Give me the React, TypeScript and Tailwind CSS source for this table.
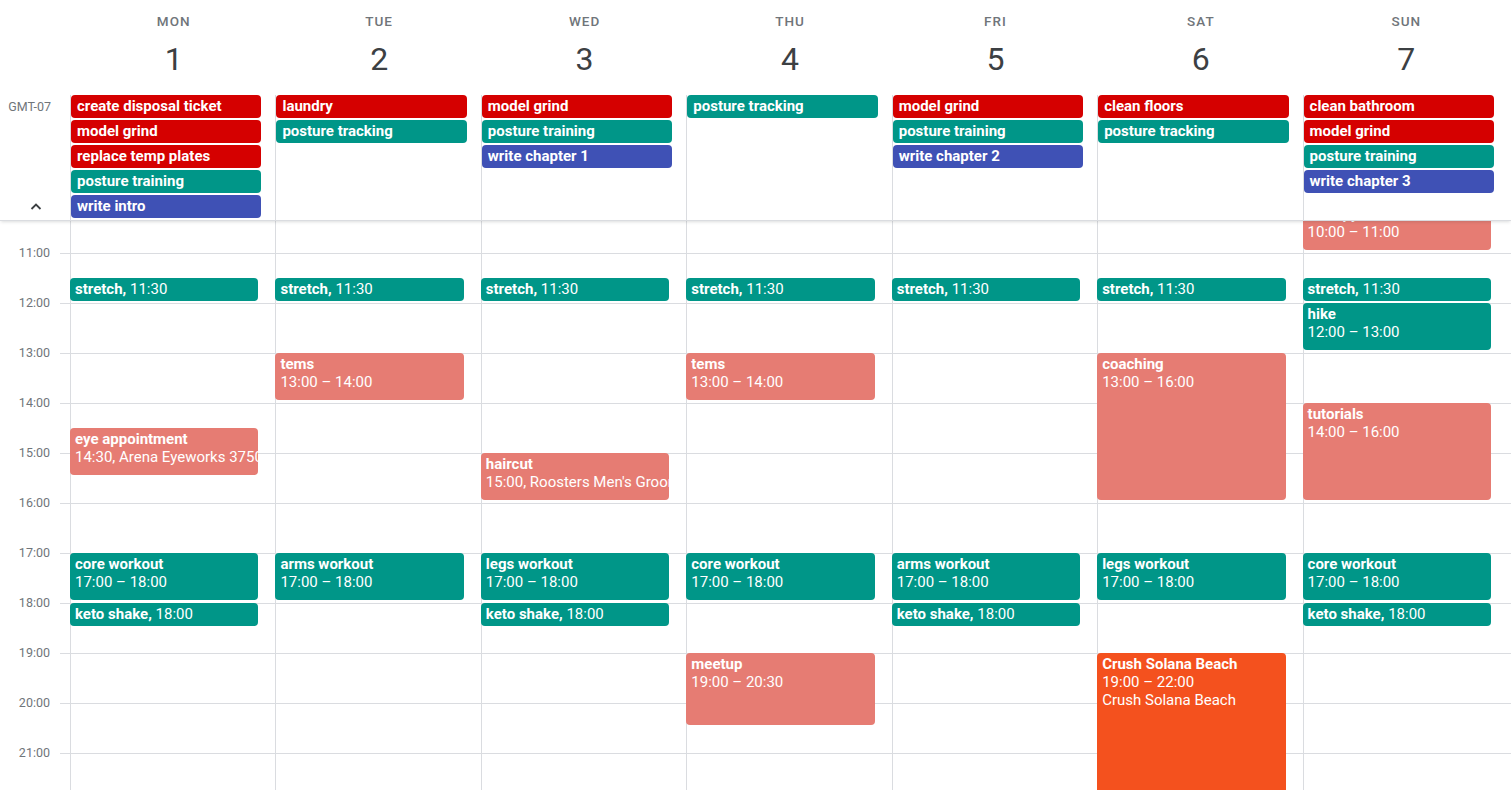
import React from 'react';

type Color = 'red' | 'teal' | 'blue' | 'salmon' | 'orange';

const colorClass: Record<Color, string> = {
  red: 'bg-[#d50000]',
  teal: 'bg-[#009688]',
  blue: 'bg-[#3f51b5]',
  salmon: 'bg-[#e67c73]',
  orange: 'bg-[#f4511e]',
};

interface AllDayEvent {
  title: string;
  color: Color;
}

interface TimedEvent {
  title: string;
  start: number;
  end?: number; // no end = short one-line event
  detail?: string;
  extra?: string;
  color: Color;
}

interface Day {
  name: string;
  date: number;
  allDay: AllDayEvent[];
  events: TimedEvent[];
}

const START_HOUR = 10;
const HOUR_HEIGHT = 50;
const hours = [10, 11, 12, 13, 14, 15, 16, 17, 18, 19, 20, 21, 22, 23];

const stretch: TimedEvent = { title: 'stretch', start: 11.5, color: 'teal' };
const keto: TimedEvent = { title: 'keto shake', start: 18, color: 'teal' };

const days: Day[] = [
  {
    name: 'MON',
    date: 1,
    allDay: [
      { title: 'create disposal ticket', color: 'red' },
      { title: 'model grind', color: 'red' },
      { title: 'replace temp plates', color: 'red' },
      { title: 'posture training', color: 'teal' },
      { title: 'write intro', color: 'blue' },
    ],
    events: [
      stretch,
      { title: 'eye appointment', start: 14.5, end: 15.5, detail: '14:30, Arena Eyeworks 3750 Via de la Valle', color: 'salmon' },
      { title: 'core workout', start: 17, end: 18, color: 'teal' },
      keto,
    ],
  },
  {
    name: 'TUE',
    date: 2,
    allDay: [
      { title: 'laundry', color: 'red' },
      { title: 'posture tracking', color: 'teal' },
    ],
    events: [
      stretch,
      { title: 'tems', start: 13, end: 14, color: 'salmon' },
      { title: 'arms workout', start: 17, end: 18, color: 'teal' },
    ],
  },
  {
    name: 'WED',
    date: 3,
    allDay: [
      { title: 'model grind', color: 'red' },
      { title: 'posture training', color: 'teal' },
      { title: 'write chapter 1', color: 'blue' },
    ],
    events: [
      stretch,
      { title: 'haircut', start: 15, end: 16, detail: "15:00, Roosters Men's Grooming Center", color: 'salmon' },
      { title: 'legs workout', start: 17, end: 18, color: 'teal' },
      keto,
    ],
  },
  {
    name: 'THU',
    date: 4,
    allDay: [{ title: 'posture tracking', color: 'teal' }],
    events: [
      stretch,
      { title: 'tems', start: 13, end: 14, color: 'salmon' },
      { title: 'core workout', start: 17, end: 18, color: 'teal' },
      { title: 'meetup', start: 19, end: 20.5, color: 'salmon' },
    ],
  },
  {
    name: 'FRI',
    date: 5,
    allDay: [
      { title: 'model grind', color: 'red' },
      { title: 'posture training', color: 'teal' },
      { title: 'write chapter 2', color: 'blue' },
    ],
    events: [
      stretch,
      { title: 'arms workout', start: 17, end: 18, color: 'teal' },
      keto,
    ],
  },
  {
    name: 'SAT',
    date: 6,
    allDay: [
      { title: 'clean floors', color: 'red' },
      { title: 'posture tracking', color: 'teal' },
    ],
    events: [
      stretch,
      { title: 'coaching', start: 13, end: 16, color: 'salmon' },
      { title: 'legs workout', start: 17, end: 18, color: 'teal' },
      { title: 'Crush Solana Beach', start: 19, end: 22, extra: 'Crush Solana Beach', color: 'orange' },
    ],
  },
  {
    name: 'SUN',
    date: 7,
    allDay: [
      { title: 'clean bathroom', color: 'red' },
      { title: 'model grind', color: 'red' },
      { title: 'posture training', color: 'teal' },
      { title: 'write chapter 3', color: 'blue' },
    ],
    events: [
      { title: 'therapy', start: 10, end: 11, color: 'salmon' },
      stretch,
      { title: 'hike', start: 12, end: 13, color: 'teal' },
      { title: 'tutorials', start: 14, end: 16, color: 'salmon' },
      { title: 'core workout', start: 17, end: 18, color: 'teal' },
      keto,
    ],
  },
];

const fmt = (h: number) => {
  const whole = Math.floor(h);
  const min = Math.round((h - whole) * 60);
  return `${whole}:${min < 10 ? '0' : ''}${min}`;
};

const EventBlock: React.FC<{ ev: TimedEvent }> = ({ ev }) => {
  const top = (ev.start - START_HOUR) * HOUR_HEIGHT;
  const height = ev.end ? (ev.end - ev.start) * HOUR_HEIGHT - 3 : 23;

  return (
    <div
      className={`absolute left-[-1px] right-[17px] overflow-hidden rounded-[4px] px-[5px] pt-[2px] text-[15px] leading-[18px] text-white ${colorClass[ev.color]}`}
      style={{ top, height }}
    >
      {ev.end ? (
        <>
          <div className="whitespace-nowrap font-bold">{ev.title}</div>
          <div className="whitespace-nowrap">{ev.detail ?? `${fmt(ev.start)} – ${fmt(ev.end)}`}</div>
          {ev.extra && <div className="whitespace-nowrap">{ev.extra}</div>}
        </>
      ) : (
        <div className="whitespace-nowrap">
          <span className="font-bold">{ev.title},</span> {fmt(ev.start)}
        </div>
      )}
    </div>
  );
};

const App: React.FC = () => {
  return (
    <div className="flex h-[790px] w-full flex-col overflow-hidden bg-white font-['Roboto',sans-serif]">
      {/* header: day names + all-day events */}
      <div className="relative z-10 shrink-0 border-b border-[#dadce0] bg-white shadow-[0_2px_3px_-1px_rgba(60,64,67,0.18)]">
        <div className="flex h-[95px]">
          <div className="w-[70px] shrink-0" />
          <div className="grid flex-1 grid-cols-7">
            {days.map((d) => (
              <div key={d.name} className="flex flex-col items-center pt-[13px]">
                <span className="pl-[2px] text-[13.5px] font-medium leading-[16px] tracking-[1px] text-[#70757a]">{d.name}</span>
                <span className="mt-[10px] pl-[2px] text-[32px] leading-[40px] text-[#3c4043]">{d.date}</span>
              </div>
            ))}
          </div>
          <div className="w-[3px] shrink-0" />
        </div>

        <div className="flex h-[125px]">
          <div className="flex w-[70px] shrink-0 flex-col justify-between">
            <span className="pr-[19px] pt-[4px] text-right text-[12.5px] leading-[16px] text-[#70757a]">GMT-07</span>
            <div className="flex justify-end pb-[10px] pr-[28px]">
              <svg width="12" height="8" viewBox="0 0 12 8" fill="none">
                <polyline points="1.5,7 6,2.5 10.5,7" stroke="#3c4043" strokeWidth="1.8" />
              </svg>
            </div>
          </div>
          <div className="grid flex-1 grid-cols-7">
            {days.map((d) => (
              <div key={d.name} className="flex flex-col gap-[2px] border-l border-[#dadce0] pr-[14px]">
                {d.allDay.map((a, i) => (
                  <div
                    key={i}
                    className={`h-[23px] overflow-hidden whitespace-nowrap rounded-[4px] px-[6px] text-[15px] font-bold leading-[23px] text-white ${colorClass[a.color]}`}
                  >
                    {a.title}
                  </div>
                ))}
              </div>
            ))}
          </div>
          <div className="w-[3px] shrink-0" />
        </div>
      </div>

      {/* time grid */}
      <div className="min-h-0 flex-1 overflow-hidden">
        <div className="-mt-[18px] flex">
          <div className="w-[70px] shrink-0">
            {hours.map((h) => (
              <div key={h} className="flex h-[50px]">
                <span className="-mt-[8px] w-[60px] pr-[10px] text-right text-[12.5px] leading-[16px] text-[#70757a]">
                  {h > START_HOUR && h < 22 ? `${h}:00` : ''}
                </span>
                <div className="w-[10px] border-t border-[#dadce0]" />
              </div>
            ))}
          </div>
          <div className="grid flex-1 grid-cols-7">
            {days.map((d) => (
              <div key={d.name} className="relative border-l border-[#dadce0]">
                {hours.map((h) => (
                  <div key={h} className="h-[50px] border-t border-[#dadce0]" />
                ))}
                {d.events.map((ev, i) => (
                  <EventBlock key={i} ev={ev} />
                ))}
              </div>
            ))}
          </div>
          <div className="w-[3px] shrink-0">
            {hours.map((h) => (
              <div key={h} className="h-[50px] border-t border-[#dadce0]" />
            ))}
          </div>
        </div>
      </div>
    </div>
  );
};

export default App;
